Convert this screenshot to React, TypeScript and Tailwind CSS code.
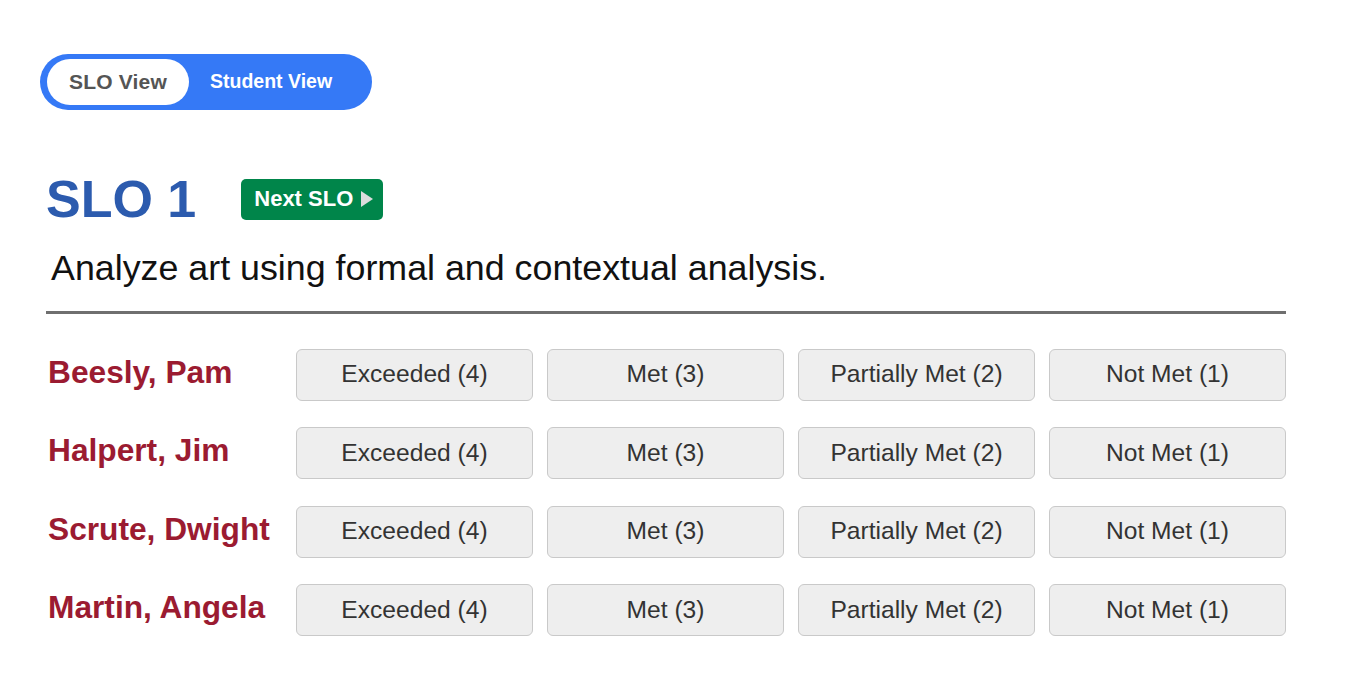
import React from "react";

const students = ["Beesly, Pam", "Halpert, Jim", "Scrute, Dwight", "Martin, Angela"];
const ratings = ["Exceeded (4)", "Met (3)", "Partially Met (2)", "Not Met (1)"];

export default function App() {
  return (
    <div
      className="min-h-[700px] w-[1350px] bg-white pl-[46px] pt-[54px]"
      style={{ fontFamily: '"Liberation Sans", Arial, sans-serif' }}
    >
      {/* view toggle */}
      <div className="-ml-[6px] flex h-[56px] w-[332px] items-center rounded-full bg-[#3579f6] pl-[7px]">
        <div className="flex h-[46px] w-[142px] items-center justify-center rounded-full bg-white">
          <span className="text-[21px] font-bold tracking-[0.2px] text-[#555555]">SLO View</span>
        </div>
        <span className="ml-[21px] text-[19.5px] font-bold text-white">Student View</span>
      </div>

      {/* heading */}
      <div className="mt-[63px] flex items-center">
        <h1 className="text-[52px] font-bold leading-none text-[#2c5bae]">SLO 1</h1>
        <button className="ml-[45px] flex h-[41px] items-center rounded-[5px] bg-[#00854a] pl-[13px] pr-[10px]">
          <span className="text-[22px] font-bold leading-none text-white">Next SLO</span>
          <svg width="12" height="16" viewBox="0 0 12 16" className="ml-[8px] block shrink-0">
            <polygon points="0,0 12,8 0,16" fill="#dcdcdc" />
          </svg>
        </button>
      </div>

      <p className="ml-[5px] mt-[26px] text-[35.8px] leading-none text-[#111111]">
        Analyze art using formal and contextual analysis.
      </p>

      <div className="mt-[24px] h-[3px] w-[1240px] bg-[#6f6f6f]" />

      {/* ratings grid */}
      <div className="mt-[35px] grid grid-cols-[236px_repeat(4,237px)] gap-x-[14px] gap-y-[26.4px]">
        {students.map((name) => (
          <React.Fragment key={name}>
            <div className="flex h-[52px] items-center pb-[4px] pl-[2px]">
              <span className="text-[31.7px] font-bold leading-none text-[#9b1b31]">{name}</span>
            </div>
            {ratings.map((r) => (
              <button
                key={r}
                className="flex h-[52px] items-center justify-center rounded-[6px] border-[1.5px] border-[#c9c9c9] bg-[#eeeeee] text-[24.6px] text-[#333333]"
              >
                {r}
              </button>
            ))}
          </React.Fragment>
        ))}
      </div>
    </div>
  );
}
